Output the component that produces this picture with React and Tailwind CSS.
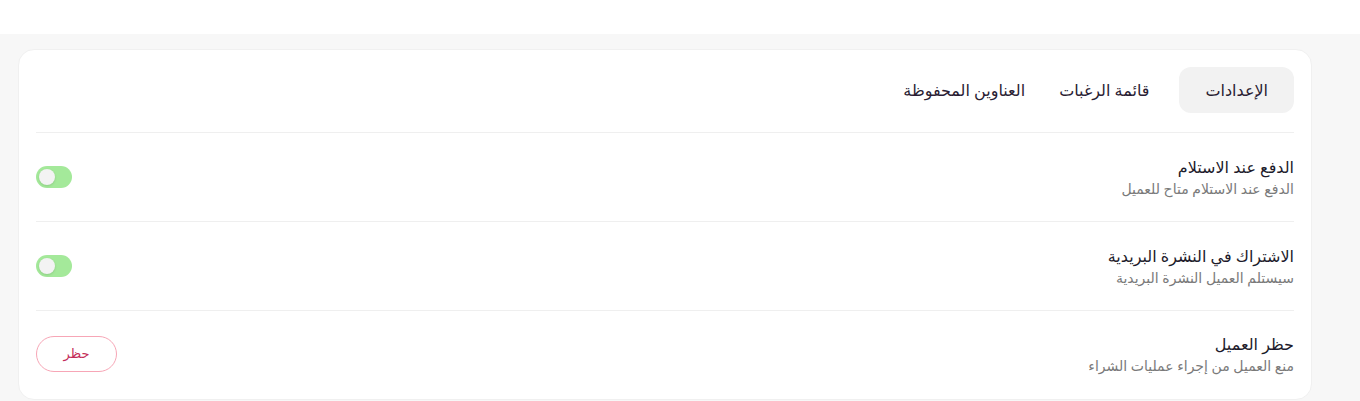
import React, { useState } from 'react';

const tabs = ['الإعدادات', 'قائمة الرغبات', 'العناوين المحفوظة'];

const Toggle = ({ on, onChange }) => (
  <button
    onClick={onChange}
    className={`relative w-9 h-[22px] rounded-full transition-colors ${on ? 'bg-[#a4e99a]' : 'bg-gray-300'}`}
  >
    <span
      className={`absolute top-[3px] w-4 h-4 rounded-full bg-[#f3f3f3] shadow-sm transition-all ${on ? 'left-[3px]' : 'left-[17px]'}`}
    />
  </button>
);

const SettingRow = ({ title, desc, children, last }) => (
  <div className={`flex items-center justify-between ${last ? 'pt-[21px] pb-[23px]' : 'py-[22px] border-b border-[#efefef]'}`}>
    <div>
      <p className="text-[16px] leading-6 text-[#1d1b2b]">{title}</p>
      <p className="text-[14px] leading-5 text-[#7a7a7a] tracking-[0.2px]">{desc}</p>
    </div>
    {children}
  </div>
);

export default function App() {
  const [active, setActive] = useState(0);
  const [cod, setCod] = useState(true);
  const [news, setNews] = useState(true);

  return (
    <div dir="rtl" className="min-h-screen bg-white" style={{ fontFamily: '"Noto Sans", "DejaVu Sans", sans-serif' }}>
      <div className="h-[34px] bg-white" />
      <div className="bg-[#f7f7f7] pt-[15px] pl-[18px] pr-[48px] pb-4">
        <div className="bg-white rounded-2xl border border-[#f0f0f0] px-[17px] pt-[17px]">
          {/* Tabs */}
          <div className="flex items-center gap-[34px] pb-[19px] border-b border-[#efefef]">
            {tabs.map((t, i) => (
              <button
                key={t}
                onClick={() => setActive(i)}
                className={`h-[46px] rounded-xl text-[16px] text-[#2a1d33] ${active === i ? 'bg-[#f2f2f2] px-[26px] -ml-[4px]' : 'px-0'}`}
              >
                {t}
              </button>
            ))}
          </div>

          <SettingRow title="الدفع عند الاستلام" desc="الدفع عند الاستلام متاح للعميل">
            <Toggle on={cod} onChange={() => setCod(!cod)} />
          </SettingRow>
          <SettingRow title="الاشتراك في النشرة البريدية" desc="سيستلم العميل النشرة البريدية">
            <Toggle on={news} onChange={() => setNews(!news)} />
          </SettingRow>
          <SettingRow title="حظر العميل" desc="منع العميل من إجراء عمليات الشراء" last>
            <button className="w-[81px] h-9 rounded-full border border-[#f7a6b6] text-[13px] text-[#c42d5a]">
              حظر
            </button>
          </SettingRow>
        </div>
      </div>
    </div>
  );
}
